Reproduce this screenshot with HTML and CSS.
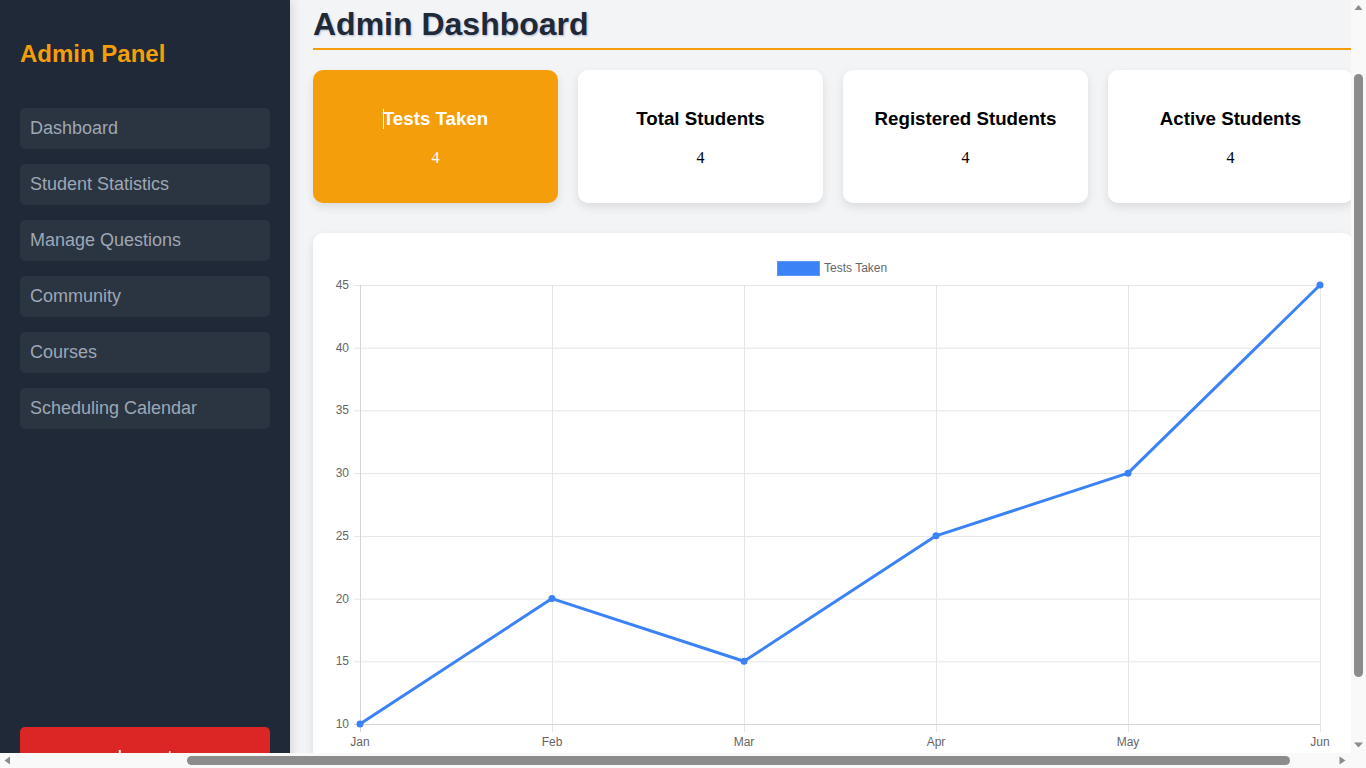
FILE: index.html
```html
<!DOCTYPE html>
<html lang="en">
<head>
<meta charset="utf-8">
<title>Admin Dashboard</title>
<link rel="stylesheet" href="styles.css">
</head>
<body>
<div class="window">
  <div class="viewport">
    <div class="app">
      <aside class="sidebar">
        <h2 class="brand">Admin Panel</h2>
        <nav class="nav">
          <a class="nav-item">Dashboard</a>
          <a class="nav-item">Student Statistics</a>
          <a class="nav-item">Manage Questions</a>
          <a class="nav-item">Community</a>
          <a class="nav-item">Courses</a>
          <a class="nav-item">Scheduling Calendar</a>
        </nav>
        <button class="logout">Logout</button>
      </aside>
      <main class="main">
        <h1 class="page-title">Admin Dashboard</h1>
        <section class="stats">
          <div class="stat-card stat-card--active">
            <h3 class="stat-title"><span class="caret"></span>Tests Taken</h3>
            <p class="stat-value">4</p>
          </div>
          <div class="stat-card">
            <h3 class="stat-title">Total Students</h3>
            <p class="stat-value">4</p>
          </div>
          <div class="stat-card">
            <h3 class="stat-title">Registered Students</h3>
            <p class="stat-value">4</p>
          </div>
          <div class="stat-card">
            <h3 class="stat-title">Active Students</h3>
            <p class="stat-value">4</p>
          </div>
        </section>
        <section class="chart-card">
          <svg class="chart" width="1000" height="520" viewBox="0 0 1000 520">
            <g class="legend">
              <rect x="444.5" y="8.5" width="42" height="14" fill="#3b82f6" stroke="#5b9af8" stroke-width="1"/>
              <text x="491" y="19" class="legend-text">Tests Taken</text>
            </g>
            <g class="grid" stroke="#e5e5e5" stroke-width="1">
              <line x1="21" y1="32.5" x2="987" y2="32.5"/>
              <line x1="21" y1="95.2" x2="987" y2="95.2"/>
              <line x1="21" y1="157.9" x2="987" y2="157.9"/>
              <line x1="21" y1="220.6" x2="987" y2="220.6"/>
              <line x1="21" y1="283.4" x2="987" y2="283.4"/>
              <line x1="21" y1="346.1" x2="987" y2="346.1"/>
              <line x1="21" y1="408.8" x2="987" y2="408.8"/>
              <line x1="219.5" y1="32" x2="219.5" y2="479"/>
              <line x1="411.5" y1="32" x2="411.5" y2="479"/>
              <line x1="603.5" y1="32" x2="603.5" y2="479"/>
              <line x1="795.5" y1="32" x2="795.5" y2="479"/>
              <line x1="987.5" y1="32" x2="987.5" y2="479"/>
            </g>
            <g stroke="#d4d4d4" stroke-width="1">
              <line x1="27.5" y1="32" x2="27.5" y2="479"/>
              <line x1="21" y1="471.5" x2="987" y2="471.5"/>
            </g>
            <g class="ticks" text-anchor="end">
              <text x="16" y="36">45</text>
              <text x="16" y="98.7">40</text>
              <text x="16" y="161.4">35</text>
              <text x="16" y="224.1">30</text>
              <text x="16" y="286.9">25</text>
              <text x="16" y="349.6">20</text>
              <text x="16" y="412.3">15</text>
              <text x="16" y="475">10</text>
            </g>
            <g class="ticks" text-anchor="middle">
              <text x="27" y="493">Jan</text>
              <text x="219" y="493">Feb</text>
              <text x="411" y="493">Mar</text>
              <text x="603" y="493">Apr</text>
              <text x="795" y="493">May</text>
              <text x="987" y="493">Jun</text>
            </g>
            <polyline points="27,471 219,345.57 411,408.29 603,282.86 795,220.14 987,32" fill="none" stroke="#3b82f6" stroke-width="3" stroke-linejoin="round"/>
            <g fill="#3b82f6">
              <circle cx="27" cy="471" r="3.5"/>
              <circle cx="219" cy="345.57" r="3.5"/>
              <circle cx="411" cy="408.29" r="3.5"/>
              <circle cx="603" cy="282.86" r="3.5"/>
              <circle cx="795" cy="220.14" r="3.5"/>
              <circle cx="987" cy="32" r="3.5"/>
            </g>
          </svg>
        </section>
      </main>
    </div>
  </div>
  <div class="vscroll">
    <div class="sb-btn">
      <svg width="15" height="15" viewBox="0 0 15 15"><polygon points="3.5,10 11.5,10 7.5,5" fill="#8c8c8c"/></svg>
    </div>
    <div class="vtrack"><div class="vthumb"></div></div>
    <div class="sb-btn">
      <svg width="15" height="15" viewBox="0 0 15 15"><polygon points="3,4.5 12,4.5 7.5,9.5" fill="#8c8c8c"/></svg>
    </div>
  </div>
  <div class="hscroll">
    <div class="sb-btn">
      <svg width="15" height="15" viewBox="0 0 15 15"><polygon points="10,3.5 10,11.5 4.5,7.5" fill="#8c8c8c"/></svg>
    </div>
    <div class="htrack"><div class="hthumb"></div></div>
    <div class="sb-btn">
      <svg width="15" height="15" viewBox="0 0 15 15"><polygon points="3.5,3.5 3.5,11.5 9.5,7.5" fill="#8c8c8c"/></svg>
    </div>
  </div>
  <div class="corner"></div>
</div>
</body>
</html>
```
FILE: styles.css
```css
* { box-sizing: border-box; }

html, body {
  margin: 0;
  padding: 0;
  height: 100%;
  overflow: hidden;
}

body {
  font-family: "Liberation Serif", "Times New Roman", serif;
  background: #f3f4f6;
}

.window {
  display: grid;
  grid-template-columns: 1fr 15px;
  grid-template-rows: 1fr 15px;
  width: 100vw;
  height: 100vh;
}

.viewport {
  overflow: hidden;
  min-width: 0;
  min-height: 0;
}

.app {
  display: flex;
  height: 802px;
  width: 1400px;
}

/* Sidebar */
.sidebar {
  position: relative;
  z-index: 1;
  width: 290px;
  flex: 0 0 290px;
  background: #1f2937;
  padding: 20px;
  display: flex;
  flex-direction: column;
  box-shadow: 2px 0 10px rgba(0, 0, 0, 0.12);
  font-family: "Liberation Sans", Arial, sans-serif;
}

.brand {
  margin: 20px 0 40px;
  font-size: 24px;
  line-height: 28px;
  font-weight: bold;
  color: #f59e0b;
}

.nav {
  display: flex;
  flex-direction: column;
  gap: 15px;
}

.nav-item {
  display: block;
  background: #2b3441;
  color: #9ea7b4;
  font-size: 18px;
  line-height: 21px;
  padding: 10px;
  border-radius: 5px;
}

.logout {
  margin-top: auto;
  display: block;
  width: 100%;
  border: none;
  background: #dc2626;
  color: #ffffff;
  font-family: "Liberation Sans", Arial, sans-serif;
  font-size: 18px;
  line-height: 21px;
  padding: 20px 10px 14px;
  border-radius: 5px;
}

/* Main */
.main {
  flex: 0 0 1063px;
  padding: 0 0 0 23px;
  background: #f3f4f6;
}

.page-title {
  margin: 0;
  padding: 6px 0 6px;
  font-family: "Liberation Sans", Arial, sans-serif;
  font-size: 32px;
  line-height: 36px;
  font-weight: bold;
  color: #1f2937;
  text-shadow: 1px 1px 2px rgba(30, 64, 120, 0.3);
  border-bottom: 2px solid #f59e0b;
}

.stats {
  margin-top: 20px;
  display: grid;
  grid-template-columns: repeat(4, 245px);
  gap: 20px;
}

.stat-card {
  background: #ffffff;
  border-radius: 10px;
  padding: 38px 20px 36px;
  text-align: center;
  color: #000000;
  box-shadow: 0 4px 10px rgba(0, 0, 0, 0.1);
}

.stat-card--active {
  background: #f59e0b;
  color: #ffffff;
}

.stat-title {
  margin: 0 0 19px;
  font-family: "Liberation Sans", Arial, sans-serif;
  font-size: 18.72px;
  line-height: 22px;
  font-weight: bold;
}

.caret {
  display: inline-block;
  width: 1px;
  height: 20px;
  margin-right: -1px;
  vertical-align: -4px;
  background: #ffffff;
}

.stat-value {
  margin: 0;
  font-size: 16px;
  line-height: 18px;
}

.chart-card {
  margin-top: 30px;
  width: 1040px;
  background: #ffffff;
  border-radius: 10px;
  padding: 20px;
  box-shadow: 0 4px 10px rgba(0, 0, 0, 0.1);
}

.chart {
  display: block;
  font-family: "Liberation Sans", Arial, sans-serif;
  font-size: 12px;
}

.ticks text,
.legend-text {
  fill: #666666;
  font-size: 12px;
}

/* Scrollbars */
.vscroll {
  background: #f9f9f9;
  display: flex;
  flex-direction: column;
}

.hscroll {
  background: #f9f9f9;
  display: flex;
  flex-direction: row;
}

.corner {
  background: #f9f9f9;
}

.sb-btn {
  flex: 0 0 15px;
  width: 15px;
  height: 15px;
}

.sb-btn svg {
  display: block;
}

.vtrack {
  flex: 1;
  display: flex;
  flex-direction: column;
  align-items: center;
}

.vthumb {
  margin-top: 59px;
  width: 9px;
  height: 603px;
  border-radius: 5px;
  background: #8c8c8c;
}

.htrack {
  flex: 1;
  display: flex;
  align-items: center;
}

.hthumb {
  margin-left: 172px;
  width: 1103px;
  height: 9px;
  border-radius: 5px;
  background: #8c8c8c;
}
```
